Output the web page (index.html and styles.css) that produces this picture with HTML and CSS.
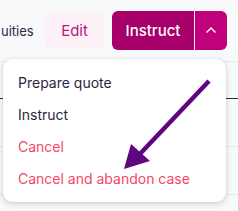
FILE: index.html
```html
<!DOCTYPE html>
<html lang="en">

<head>
    <meta charset="UTF-8">
    <meta name="viewport" content="width=device-width, initial-scale=1.0">
    <title>Case actions</title>
    <link rel="stylesheet" href="styles.css">
</head>

<body>
    <div class="page">
        <div class="toolbar">
            <span class="crumb">uities</span>
            <a href="javascript:;" class="btn-edit">Edit</a>
            <div class="split">
                <a href="javascript:;" class="split-main">Instruct</a>
                <a href="javascript:;" class="split-toggle">
                    <svg width="12" height="8" viewBox="0 0 12 8">
                        <path d="M1.5 6.5 L6 2 L10.5 6.5" fill="none" stroke="#fff" stroke-width="1.4" />
                    </svg>
                </a>
            </div>
        </div>
        <div class="rows">
            <div class="row"></div>
            <div class="row"></div>
            <div class="row"></div>
        </div>

        <ul class="menu">
            <li>Prepare quote</li>
            <li>Instruct</li>
            <li class="danger">Cancel</li>
            <li class="danger">Cancel and abandon case</li>
        </ul>

        <svg class="pointer" width="238" height="211" viewBox="0 0 238 211">
            <line x1="209" y1="81" x2="138" y2="156" stroke="#5e0580" stroke-width="4.5" />
            <polygon points="124,169 131,144 150,161" fill="#5e0580" />
        </svg>
    </div>
</body>

</html>
```

FILE: styles.css
```css
* {
    margin: 0;
    padding: 0;
    box-sizing: border-box;
}

body {
    background-color: #f8f9fb;
    font-family: Inter, "Noto Sans", sans-serif;
}

.page {
    position: relative;
    width: 238px;
    height: 211px;
    overflow: hidden;
}

.toolbar {
    display: flex;
    align-items: center;
    height: 62px;
    border-bottom: 1px solid #e6e8ee;
}

.crumb {
    font-size: 13px;
    color: #2d2a4a;
    padding-left: 1px;
    width: 45px;
}

.btn-edit {
    display: flex;
    align-items: center;
    justify-content: center;
    width: 59px;
    height: 38px;
    margin-top: -1px;
    border-radius: 7px;
    background-color: #fdf1f8;
    color: #c01484;
    font-size: 15px;
    text-decoration: none;
}

.split {
    display: flex;
    margin-left: 8px;
    margin-top: -1px;
    height: 39px;
}

.split-main {
    display: flex;
    align-items: center;
    justify-content: center;
    width: 82px;
    background-color: #a7006a;
    color: #fff;
    font-size: 15px;
    font-weight: 500;
    text-decoration: none;
    border-radius: 6px 0 0 6px;
}

.split-toggle {
    display: flex;
    align-items: center;
    justify-content: center;
    width: 32px;
    margin-left: 1px;
    background-color: #c1007b;
    border-radius: 0 6px 6px 0;
}

.rows .row {
    height: 48px;
    border-bottom: 1px solid #e3e6ec;
}

.rows .row:first-child {
    height: 37px;
    border-bottom-color: #2d2a4a;
}

.menu {
    position: absolute;
    left: 3px;
    top: 59px;
    width: 223px;
    height: 143px;
    padding-top: 8px;
    background-color: #fff;
    border-radius: 9px;
    box-shadow: 0 2px 6px rgba(40, 40, 60, 0.18), 0 0 1px rgba(40, 40, 60, 0.2);
    list-style: none;
}

.menu li {
    height: 32px;
    line-height: 32px;
    padding-left: 15px;
    font-size: 14px;
    color: #2f1f40;
}

.menu li.danger {
    color: #f2476c;
}

.pointer {
    position: absolute;
    left: 0;
    top: 0;
}
```
